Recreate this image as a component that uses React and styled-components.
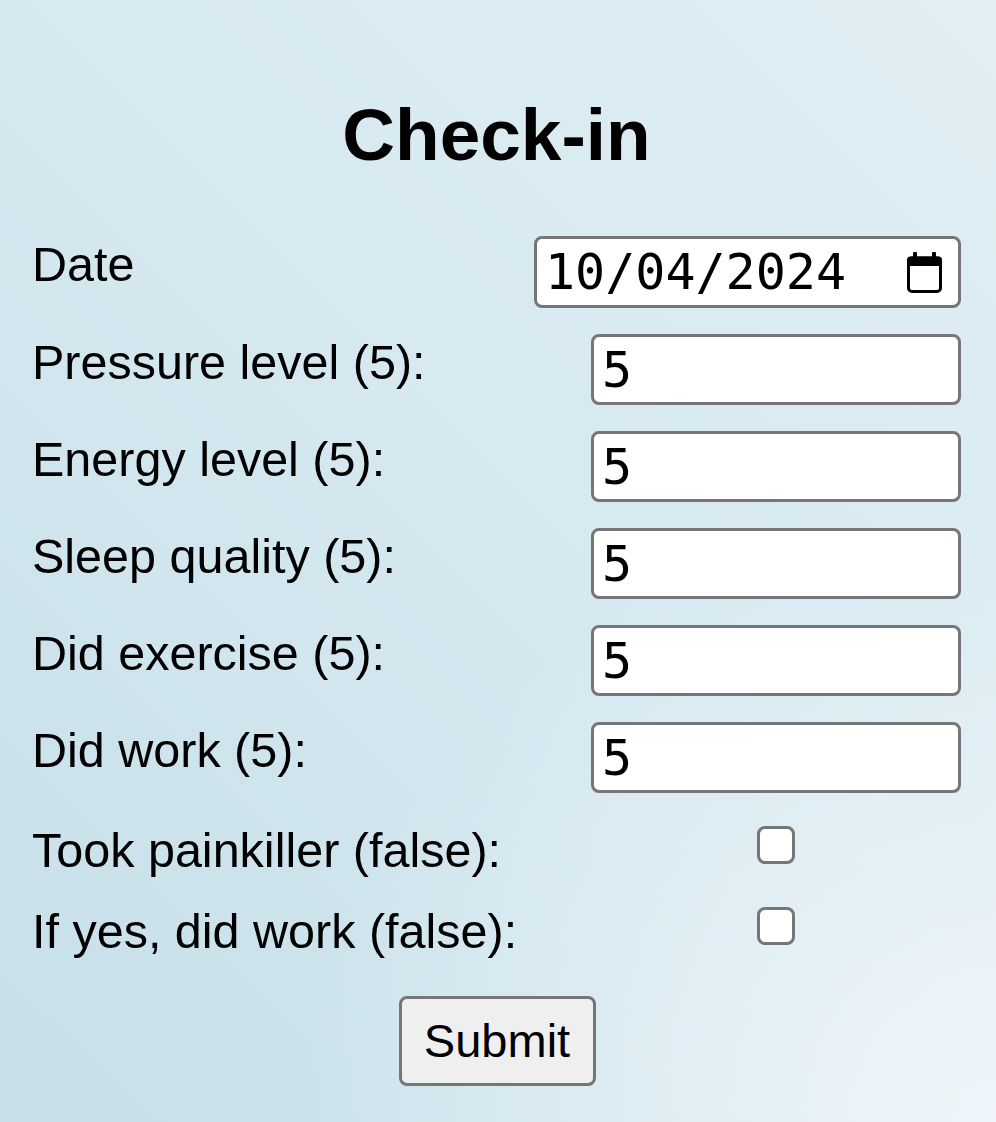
import React from "react";
import styled, { createGlobalStyle } from "styled-components";

const GlobalStyle = createGlobalStyle`
  html, body {
    margin: 0;
    padding: 0;
  }
  body {
    font-family: "Liberation Sans", Arial, sans-serif;
    color: #000;
  }
`;

const Page = styled.div`
  min-height: 100vh;
  box-sizing: border-box;
  padding: 93px 35px 40px 32px;
  background:
    radial-gradient(ellipse 70% 55% at 100% 100%, rgba(240, 246, 250, 0.95) 0%, rgba(240, 246, 250, 0) 100%),
    linear-gradient(45deg, #c6dfe9 0%, #d5e8f0 50%, #e1eef4 100%);
`;

const Title = styled.h1`
  margin: 0;
  text-align: center;
  font-size: 73px;
  line-height: 83px;
  font-weight: 700;
`;

const Form = styled.form`
  margin-top: 60px;
  display: flex;
  flex-direction: column;
`;

const Fields = styled.div`
  display: flex;
  flex-direction: column;
  gap: 26px;
`;

const Checks = styled.div`
  margin-top: 29px;
  display: flex;
  flex-direction: column;
  gap: 25px;
`;

const Row = styled.div`
  display: flex;
  justify-content: space-between;
  align-items: flex-start;
`;

const Label = styled.label`
  font-size: 48.5px;
  line-height: 55px;
  padding-top: 1px;
  white-space: nowrap;
`;

const Cell = styled.div`
  width: ${(p) => (p.$wide ? "427px" : "370px")};
  display: flex;
  justify-content: center;
`;

const TextInput = styled.input`
  box-sizing: border-box;
  width: 100%;
  height: 71px;
  margin: 0;
  padding: 0 8px;
  border: 3px solid #767676;
  border-radius: 8px;
  background: #fff;
  font-family: "DejaVu Sans Mono", "Liberation Mono", monospace;
  font-size: 50px;
  color: #000;
  outline: none;
`;

const DateBox = styled.div`
  box-sizing: border-box;
  width: 100%;
  height: 72px;
  display: flex;
  align-items: center;
  padding: 0 16px 0 8px;
  border: 3px solid #767676;
  border-radius: 8px;
  background: #fff;
`;

const DateText = styled.input`
  flex: 1;
  min-width: 0;
  border: none;
  padding: 0;
  margin: 0;
  background: transparent;
  font-family: "DejaVu Sans Mono", "Liberation Mono", monospace;
  font-size: 50px;
  color: #000;
  outline: none;
`;

const Checkbox = styled.input`
  appearance: none;
  box-sizing: border-box;
  width: 38px;
  height: 38px;
  margin: 4px 0 0;
  border: 3px solid #767676;
  border-radius: 8px;
  background: #fff;
`;

const SubmitRow = styled.div`
  margin-top: 37px;
  display: flex;
  justify-content: center;
`;

const SubmitButton = styled.button`
  box-sizing: border-box;
  width: 197px;
  height: 90px;
  margin-left: 1px;
  border: 3px solid #767676;
  border-radius: 8px;
  background: #efefef;
  font-family: "Liberation Sans", Arial, sans-serif;
  font-size: 47px;
  line-height: 1;
  color: #000;
  padding: 0 0 2px;
`;

const CalendarIcon = () => (
  <svg width="35" height="41" viewBox="0 0 35 41" aria-hidden="true">
    <rect x="1.5" y="6" width="32" height="33.5" rx="3.5" fill="none" stroke="#000" strokeWidth="3" />
    <rect x="0" y="4.5" width="35" height="9.5" rx="3.5" fill="#000" />
    <rect x="6" y="0" width="4" height="7" rx="1" fill="#000" />
    <rect x="25" y="0" width="4" height="7" rx="1" fill="#000" />
  </svg>
);

const levels = [
  "Pressure level (5):",
  "Energy level (5):",
  "Sleep quality (5):",
  "Did exercise (5):",
  "Did work (5):",
];

const checks = ["Took painkiller (false):", "If yes, did work (false):"];

export default function App() {
  return (
    <>
      <GlobalStyle />
      <Page>
        <Title>Check-in</Title>
        <Form onSubmit={(e) => e.preventDefault()}>
          <Fields>
            <Row>
              <Label>Date</Label>
              <Cell $wide>
                <DateBox>
                  <DateText defaultValue="10/04/2024" />
                  <CalendarIcon />
                </DateBox>
              </Cell>
            </Row>
            {levels.map((l) => (
              <Row key={l}>
                <Label>{l}</Label>
                <Cell>
                  <TextInput defaultValue="5" />
                </Cell>
              </Row>
            ))}
          </Fields>
          <Checks>
            {checks.map((c) => (
              <Row key={c}>
                <Label>{c}</Label>
                <Cell>
                  <Checkbox type="checkbox" />
                </Cell>
              </Row>
            ))}
          </Checks>
          <SubmitRow>
            <SubmitButton type="submit">Submit</SubmitButton>
          </SubmitRow>
        </Form>
      </Page>
    </>
  );
}
